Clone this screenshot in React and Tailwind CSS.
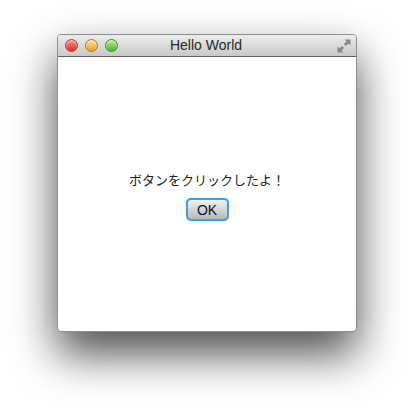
import React from "react";

const Light = ({ from, to, ring }) => (
  <div
    className={`w-[13px] h-[13px] rounded-full border ${ring} bg-gradient-to-b ${from} ${to} shadow-[inset_0_1px_2px_rgba(255,255,255,0.6)]`}
  />
);

const ResizeIcon = () => (
  <svg width="16" height="16" viewBox="0 0 16 16" fill="none">
    <path d="M8.5 1.5h6v6l-2-2-2.6 2.6-2-2 2.6-2.6z" fill="#888" />
    <path d="M7.5 14.5h-6v-6l2 2 2.6-2.6 2 2-2.6 2.6z" fill="#888" />
  </svg>
);

export default function App() {
  return (
    <div
      className="w-[414px] h-[411px] bg-white pl-[57px] pt-[34px]"
      style={{ fontFamily: '"Liberation Sans", "Noto Sans CJK JP", sans-serif' }}
    >
      <div className="w-[300px] h-[298px] flex flex-col rounded-[4px] bg-white border border-[#8f8f8f] shadow-[0_22px_45px_rgba(0,0,0,0.7)] overflow-hidden">
        {/* Title bar */}
        <div className="h-[22px] grid grid-cols-[1fr_auto_1fr] items-center px-[7px] bg-gradient-to-b from-[#ececec] to-[#c9c9c9] border-b border-[#5f5f5f]">
          <div className="flex items-center gap-[7px]">
            <Light from="from-[#ff8a85]" to="to-[#d9281f]" ring="border-[#a83a34]" />
            <Light from="from-[#ffe08a]" to="to-[#e3a01a]" ring="border-[#a8782a]" />
            <Light from="from-[#b8f08a]" to="to-[#4cb232]" ring="border-[#3f8a2c]" />
          </div>
          <div className="text-[14px] text-[#2a2a2a] pr-[2px]">Hello World</div>
          <div className="flex justify-end -mr-[3px]">
            <ResizeIcon />
          </div>
        </div>

        {/* Content */}
        <div className="flex-1 flex flex-col items-center justify-center gap-[8px] pt-[4px]">
          <div className="text-[13px] text-[#222]">ボタンをクリックしたよ！</div>
          <button className="w-[43px] h-[23px] rounded-[5px] border-2 border-[#3aa0f0] bg-gradient-to-b from-[#f2f2f2] to-[#b8b8b8] text-[14px] text-[#111] leading-none shadow-[0_0_1px_rgba(58,160,240,0.8)]">
            OK
          </button>
        </div>
      </div>
    </div>
  );
}
